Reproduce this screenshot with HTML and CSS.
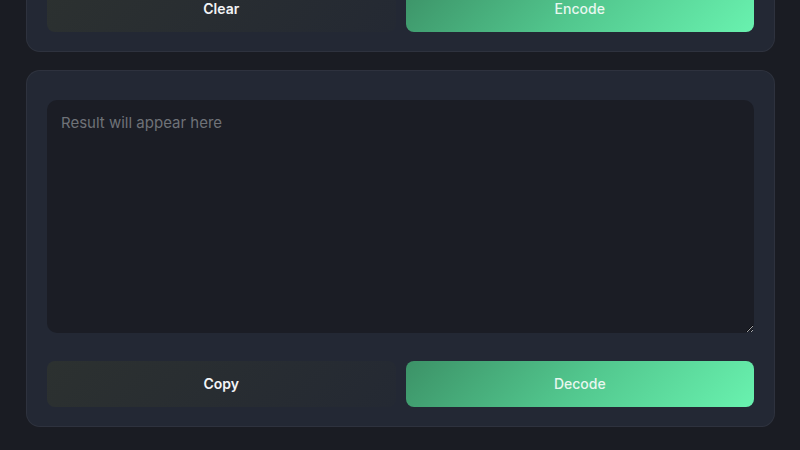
FILE: index.html
```html
<!DOCTYPE html>
<html lang="en">
<head>
  <meta charset="UTF-8">
  <meta name="viewport" content="width=device-width, initial-scale=1.0">
  <title>Base64 Encoder / Decoder</title>
  <link rel="stylesheet" href="styles.css">
</head>
<body>
  <main class="container">
    <header class="page-header">
      <h1>Base64 Encoder / Decoder</h1>
      <p>Convert text to and from Base64 right in your browser.</p>
    </header>

    <!-- Input -->
    <section class="card">
      <textarea class="text-box" id="input" placeholder="Enter text to encode or decode"></textarea>
      <div class="actions">
        <button class="btn btn-secondary" id="clear-button">Clear</button>
        <button class="btn btn-primary" id="encode-button">Encode</button>
      </div>
    </section>

    <!-- Output -->
    <section class="card output-card">
      <textarea class="text-box" id="output" placeholder="Result will appear here" readonly></textarea>
      <div class="actions">
        <button class="btn btn-secondary" id="copy-button">Copy</button>
        <button class="btn btn-primary" id="decode-button">Decode</button>
      </div>
    </section>
  </main>

  <script src="app.js"></script>
</body>
</html>
```

FILE: styles.css
```css
html {
  background-color: #1a1c23;
}

body {
  font-family: Inter, Roboto, 'Liberation Sans', sans-serif;
  margin: 0;
  padding: 0;
  background-color: #1a1c23;
  color: #f3f4f6;
}

.container {
  margin: 0 25px 0 26px;
  padding: 24px 0 23px;
  display: flex;
  flex-direction: column;
  gap: 18px;
}

.page-header h1 {
  margin: 0 0 6px;
  font-size: 22px;
  font-weight: 700;
}

.page-header p {
  margin: 0;
  font-size: 14px;
  color: #9ca3af;
}

.card {
  background-color: #232834;
  border: 1px solid rgba(255, 255, 255, 0.05);
  border-radius: 14px;
  padding: 20px 20px 19px;
}

.output-card {
  padding-top: 29px;
}

.text-box {
  display: block;
  width: 100%;
  height: 233px;
  box-sizing: border-box;
  margin: 0 0 28px;
  padding: 12px 14px;
  background-color: #1b1d25;
  border: none;
  border-radius: 10px;
  color: #e5e7eb;
  font-family: Inter, Roboto, 'Liberation Sans', sans-serif;
  font-size: 15px;
  line-height: 1.4;
  outline: none;
}

.text-box::placeholder {
  color: #6f7278;
}

.actions {
  display: grid;
  grid-template-columns: 1fr 1fr;
  gap: 10px;
}

.btn {
  height: 46px;
  padding-bottom: 2px;
  border: none;
  border-radius: 8px;
  font-family: Inter, Roboto, 'Liberation Sans', sans-serif;
  font-size: 14px;
  font-weight: 600;
  cursor: pointer;
}

.btn-secondary {
  background: linear-gradient(135deg, #2c3130 0%, #242933 100%);
  color: #f3f4f6;
}

.btn-primary {
  background: linear-gradient(135deg, #3c9267 0%, #52c78e 50%, #69f2af 100%);
  color: #e8f7ef;
  font-weight: 500;
}
```

FILE: app.js
```js
const input = document.getElementById('input');
const output = document.getElementById('output');

document.getElementById('encode-button').addEventListener('click', () => {
  output.value = btoa(unescape(encodeURIComponent(input.value)));
});

document.getElementById('decode-button').addEventListener('click', () => {
  try {
    output.value = decodeURIComponent(escape(atob(input.value.trim())));
  } catch (e) {
    output.value = 'Invalid Base64 input';
  }
});

document.getElementById('clear-button').addEventListener('click', () => {
  input.value = '';
  output.value = '';
});

document.getElementById('copy-button').addEventListener('click', () => {
  navigator.clipboard.writeText(output.value);
});

// page opens scrolled to the result
window.scrollTo(0, document.documentElement.scrollHeight);
```
